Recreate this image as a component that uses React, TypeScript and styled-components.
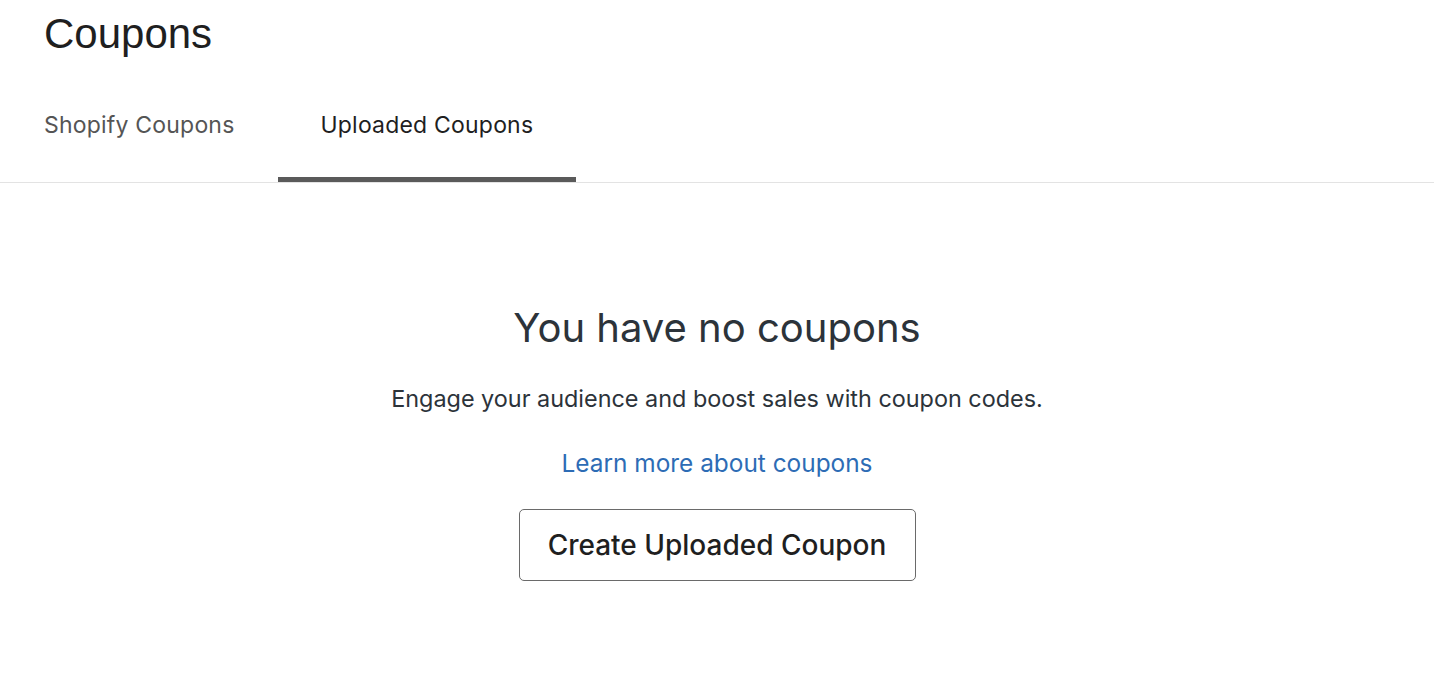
import React from "react";
import styled, { createGlobalStyle } from "styled-components";

const Global = createGlobalStyle`
  html, body { margin: 0; padding: 0; background: #ffffff; }
  body { font-family: "Inter", "Liberation Sans", sans-serif; }
`;

const Page = styled.div`
  width: 1434px;
  min-height: 678px;
  background: #fff;
`;

const Title = styled.h1`
  margin: 0;
  padding: 10px 0 0 44px;
  font-family: "Liberation Sans", Arial, sans-serif;
  font-weight: 400;
  font-size: 42px;
  line-height: 48px;
  color: #1f1f1f;
`;

const TabBar = styled.div`
  display: flex;
  margin-top: 25px;
  padding-left: 1px;
  border-bottom: 1px solid #e3e3e3;
`;

const Tab = styled.div<{ $active?: boolean }>`
  padding: 0 43px 10px;
  height: 99px;
  box-sizing: border-box;
  display: flex;
  align-items: center;
  font-size: 23px;
  letter-spacing: 0.2px;
  color: ${(p) => (p.$active ? "#1f1f1f" : "#555555")};
  border-bottom: 5px solid ${(p) => (p.$active ? "#5a5a5a" : "transparent")};
`;

const Empty = styled.div`
  display: flex;
  flex-direction: column;
  align-items: center;
  padding-top: 120px;
`;

const Heading = styled.h2`
  margin: 0;
  font-size: 40px;
  font-weight: 400;
  line-height: 50px;
  color: #2c333a;
`;

const Body = styled.p`
  margin: 31px 0 0;
  font-size: 23.4px;
  line-height: 30px;
  color: #2c333a;
`;

const LearnLink = styled.a`
  margin-top: 34px;
  font-size: 24.4px;
  line-height: 30px;
  color: #2d6cb5;
  text-decoration: none;
`;

const Button = styled.button`
  margin-top: 31px;
  width: 397px;
  height: 72px;
  border: 1px solid #6a6a6a;
  border-radius: 5px;
  background: #fff;
  font-family: inherit;
  font-size: 28px;
  font-weight: 500;
  color: #1f1f1f;
  cursor: pointer;
`;

export default function App() {
  return (
    <Page>
      <Global />
      <Title>Coupons</Title>
      <TabBar>
        <Tab>Shopify Coupons</Tab>
        <Tab $active>Uploaded Coupons</Tab>
      </TabBar>
      <Empty>
        <Heading>You have no coupons</Heading>
        <Body>Engage your audience and boost sales with coupon codes.</Body>
        <LearnLink href="#">Learn more about coupons</LearnLink>
        <Button>Create Uploaded Coupon</Button>
      </Empty>
    </Page>
  );
}
